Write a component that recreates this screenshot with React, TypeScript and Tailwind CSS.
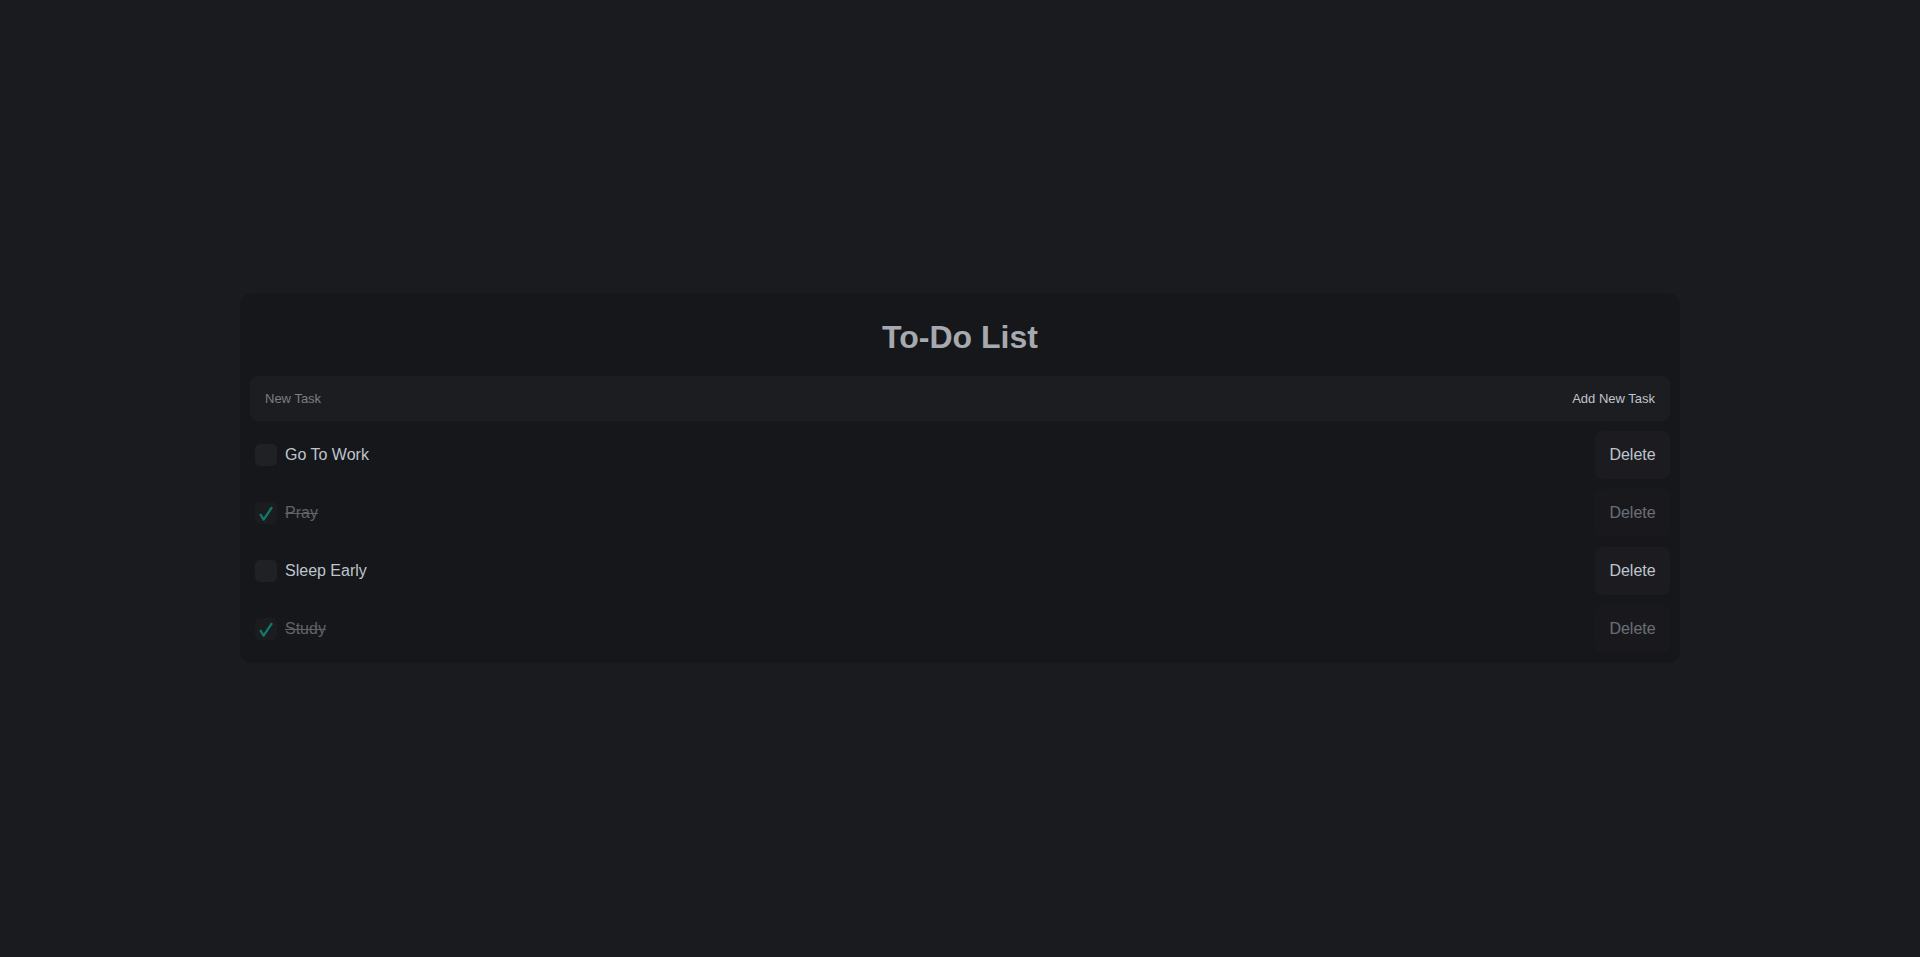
import { useState } from 'react';

interface Task {
  id: number;
  text: string;
  done: boolean;
}

const initialTasks: Task[] = [
  { id: 1, text: 'Go To Work', done: false },
  { id: 2, text: 'Pray', done: true },
  { id: 3, text: 'Sleep Early', done: false },
  { id: 4, text: 'Study', done: true },
];

function CheckIcon() {
  return (
    <svg width="14" height="15" viewBox="0 0 14 15" fill="none">
      <path d="M1.2 8 L4.6 13.6 L13 1.2" stroke="#0adcb9" strokeWidth="2.3" strokeLinejoin="round" />
    </svg>
  );
}

export default function App() {
  const [tasks, setTasks] = useState<Task[]>(initialTasks);
  const [draft, setDraft] = useState('');

  const addTask = () => {
    if (!draft.trim()) return;
    setTasks(prev => [...prev, { id: Date.now(), text: draft.trim(), done: false }]);
    setDraft('');
  };

  const toggle = (id: number) =>
    setTasks(prev => prev.map(t => (t.id === id ? { ...t, done: !t.done } : t)));

  const remove = (id: number) => setTasks(prev => prev.filter(t => t.id !== id));

  return (
    <div className="min-h-screen w-full bg-[#1a1b1f] flex justify-center pt-[293px] font-['Liberation_Sans',Arial,sans-serif]">
      <div className="w-[1440px] h-fit rounded-xl bg-[#16171b] p-[10px]">
        {/* Header */}
        <h1 className="mt-4 mb-5 text-center text-[32px] leading-[37px] font-bold text-[#a6a9ad]">To-Do List</h1>

        {/* New task input */}
        <div className="flex items-center h-[45px] rounded-lg bg-[#1c1d21] px-[15px]">
          <input
            value={draft}
            onChange={e => setDraft(e.target.value)}
            placeholder="New Task"
            className="flex-1 bg-transparent outline-none text-[13px] text-[#bfc5cc] placeholder:text-[#7b7e83]"
          />
          <button onClick={addTask} className="text-[13px] text-[#bfc5cc]">
            Add New Task
          </button>
        </div>

        {/* Task list */}
        <ul className="mt-[10px] flex flex-col gap-[10px]">
          {tasks.map(task => (
            <li key={task.id} className={`flex items-center h-[48px] pl-[5px] ${task.done ? 'opacity-50' : ''}`}>
              <button
                onClick={() => toggle(task.id)}
                className="w-[22px] h-[22px] rounded-[5px] bg-[#202125] flex items-center justify-center"
              >
                {task.done && <CheckIcon />}
              </button>
              <span className={`ml-2 text-base ${task.done ? 'line-through text-[#a7abb0]' : 'text-[#bfc5cc]'}`}>
                {task.text}
              </span>
              <button
                onClick={() => remove(task.id)}
                className="ml-auto w-[75px] h-[48px] rounded-lg bg-[#1c1c20] text-base text-[#bfc5cc]"
              >
                Delete
              </button>
            </li>
          ))}
        </ul>
      </div>
    </div>
  );
}
